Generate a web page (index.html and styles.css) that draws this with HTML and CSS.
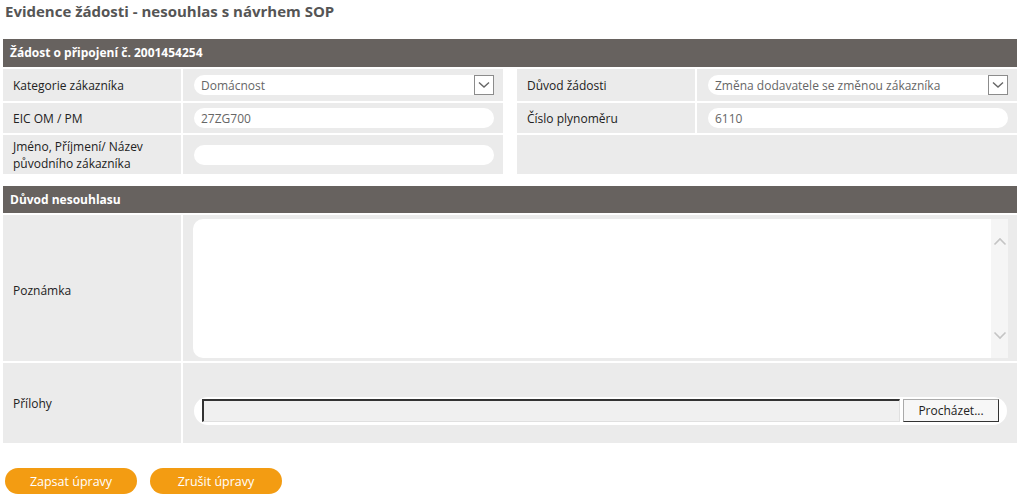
FILE: index.html
```html
<!DOCTYPE html>
<html lang="cs">
<head>
    <meta charset="UTF-8">
    <title>Evidence žádosti - nesouhlas s návrhem SOP</title>
    <link rel="stylesheet" href="styles.css">
</head>
<body>
    <h1 class="page-title">Evidence žádosti - nesouhlas s návrhem SOP</h1>

    <div class="section-head">Žádost o připojení č. 2001454254</div>
    <div class="two-col">
        <div class="form-grid">
            <div class="label">Kategorie zákazníka</div>
            <div class="field">
                <div class="select">
                    <span>Domácnost</span>
                    <span class="select-arrow">
                        <svg width="12" height="8" viewBox="0 0 12 8"><path d="M1 1.5 L6 6 L11 1.5" fill="none" stroke="#666" stroke-width="1.4"/></svg>
                    </span>
                </div>
            </div>
            <div class="label">EIC OM / PM</div>
            <div class="field"><input class="text-input" type="text" value="27ZG700"></div>
            <div class="label">Jméno, Příjmení/ Název původního zákazníka</div>
            <div class="field"><input class="text-input" type="text" value=""></div>
        </div>
        <div class="form-grid">
            <div class="label">Důvod žádosti</div>
            <div class="field">
                <div class="select">
                    <span>Změna dodavatele se změnou zákazníka</span>
                    <span class="select-arrow">
                        <svg width="12" height="8" viewBox="0 0 12 8"><path d="M1 1.5 L6 6 L11 1.5" fill="none" stroke="#666" stroke-width="1.4"/></svg>
                    </span>
                </div>
            </div>
            <div class="label">Číslo plynoměru</div>
            <div class="field"><input class="text-input" type="text" value="6110"></div>
            <div class="empty"></div>
        </div>
    </div>

    <div class="section-head second">Důvod nesouhlasu</div>
    <div class="form-grid wide">
        <div class="label note-label">Poznámka</div>
        <div class="field note-field">
            <div class="note-box">
                <textarea class="note-text"></textarea>
                <div class="fake-scroll">
                    <svg width="14" height="9" viewBox="0 0 14 9"><path d="M1.5 7.5 L7 2 L12.5 7.5" fill="none" stroke="#c4c4c4" stroke-width="1.6"/></svg>
                    <svg width="14" height="9" viewBox="0 0 14 9"><path d="M1.5 1.5 L7 7 L12.5 1.5" fill="none" stroke="#c4c4c4" stroke-width="1.6"/></svg>
                </div>
            </div>
        </div>
        <div class="label files-label">Přílohy</div>
        <div class="field files-field">
            <div class="file-pill">
                <div class="file-path"></div>
                <button class="file-btn" type="button">Procházet...</button>
            </div>
        </div>
    </div>

    <div class="actions">
        <button class="btn-orange" type="button">Zapsat úpravy</button>
        <button class="btn-orange" type="button">Zrušit úpravy</button>
    </div>
</body>
</html>
```

FILE: styles.css
```css
body {
    margin: 0;
    padding: 0 3px;
    font-family: "Open Sans", "Noto Sans", Arial, sans-serif;
    font-size: 12px;
    color: #222;
    background-color: #fff;
}
.page-title {
    font-size: 15px;
    font-weight: bold;
    color: #555;
    margin: 0;
    padding: 1px 0 0 2px;
    height: 39px;
    line-height: 20px;
    box-sizing: border-box;
}
.section-head {
    background-color: #67625f;
    color: #fff;
    font-weight: bold;
    height: 28px;
    line-height: 28px;
    padding-left: 7px;
    margin-bottom: 2px;
}
.section-head.second {
    height: 27px;
    line-height: 27px;
    margin-top: 12px;
}
.two-col {
    display: flex;
    gap: 14px;
}
.form-grid {
    flex: 1;
    display: grid;
    grid-template-columns: 178px 1fr;
    grid-template-rows: 32px 30px 39px;
    gap: 2px;
}
.label {
    background-color: #ebebeb;
    display: flex;
    align-items: center;
    padding-left: 10px;
    line-height: 17px;
}
.field {
    background-color: #ebebeb;
    display: flex;
    align-items: center;
    padding: 0 9px 0 11px;
}
.empty {
    background-color: #ebebeb;
    grid-column: 1 / 3;
}
.text-input {
    width: 100%;
    height: 20px;
    border: none;
    border-radius: 10px;
    background-color: #fff;
    padding: 0 7px;
    box-sizing: border-box;
    font-family: inherit;
    font-size: 12px;
    color: #666;
    outline: none;
}
.select {
    width: 100%;
    height: 20px;
    border-radius: 10px 0 0 10px;
    background-color: #fff;
    display: flex;
    align-items: center;
    justify-content: space-between;
    padding-left: 7px;
    box-sizing: border-box;
    color: #666;
}
.select-arrow {
    width: 18px;
    height: 18px;
    border: 1px solid #8c8c8c;
    display: flex;
    align-items: center;
    justify-content: center;
    background-color: #fff;
}

/* druhy blok */
.form-grid.wide {
    grid-template-rows: 146px 80px;
}
.note-label {
    padding-top: 4px;
}
.note-field {
    padding: 4px 9px 3px 10px;
    align-items: stretch;
}
.note-box {
    flex: 1;
    display: flex;
    background-color: #fff;
    border-radius: 10px 0 0 10px;
    overflow: hidden;
}
.note-text {
    flex: 1;
    border: none;
    resize: none;
    outline: none;
    background: transparent;
    font-family: inherit;
}
.fake-scroll {
    width: 17px;
    background-color: #f5f5f5;
    display: flex;
    flex-direction: column;
    justify-content: space-between;
    align-items: center;
    padding: 18px 0 18px;
}
.files-label {
    padding-top: 1px;
}
.files-field {
    padding: 15px 10px 0 11px;
}
.file-pill {
    flex: 1;
    height: 28px;
    background-color: #fff;
    border-radius: 14px;
    display: flex;
    align-items: center;
    padding: 0 8px;
    gap: 3px;
}
.file-path {
    flex: 1;
    height: 23px;
    box-sizing: border-box;
    background-color: #f0f0f0;
    border-top: 2px solid #333;
    border-left: 2px solid #333;
    border-bottom: 1px solid #e0e0e0;
    border-right: 1px solid #e0e0e0;
}
.file-btn {
    width: 96px;
    height: 23px;
    background-color: #f7f7f7;
    border: 1px solid #aaa;
    border-right-color: #333;
    border-bottom-color: #333;
    font-family: inherit;
    font-size: 12px;
    color: #222;
    padding: 0;
}

.actions {
    display: flex;
    gap: 13px;
    padding: 25px 0 0 2px;
}
.btn-orange {
    width: 132px;
    height: 26px;
    border: none;
    border-radius: 13px;
    background-color: #f39c12;
    color: #fff;
    font-family: inherit;
    font-size: 12.5px;
    cursor: pointer;
}
```
